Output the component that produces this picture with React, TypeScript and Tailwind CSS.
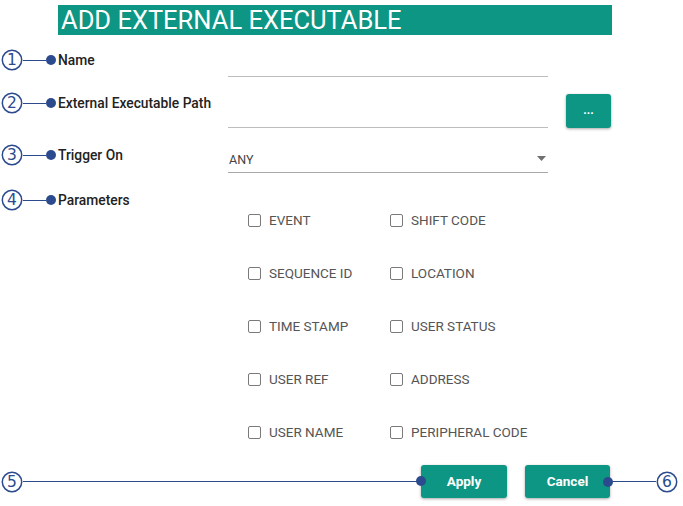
import React from "react";

const BLUE = "#2c4b8e";

function Num({ n }: { n: string }) {
  return (
    <svg width="22" height="22" viewBox="0 0 22 22" className="shrink-0">
      <circle cx="11" cy="11" r="9.7" fill="none" stroke={BLUE} strokeWidth="1.5" />
      <text
        x="11"
        y="16.4"
        textAnchor="middle"
        fontSize="15.5"
        fill={BLUE}
        fontFamily="'DejaVu Sans', sans-serif"
        fontWeight="400"
      >
        {n}
      </text>
    </svg>
  );
}

function Dot() {
  return <span className="block w-[10px] h-[10px] rounded-full bg-[#2c4b8e] shrink-0" />;
}

function Label({ n, text }: { n: string; text: string }) {
  return (
    <div className="flex items-center h-[22px] pl-[1px]">
      <Num n={n} />
      <span className="block w-[23px] h-px bg-[#2c4b8e]" />
      <Dot />
      <span className="ml-[2px] text-[13.8px] font-medium text-[#222]">{text}</span>
    </div>
  );
}

function Check({ text }: { text: string }) {
  return (
    <div className="flex items-center h-[20px]">
      <span className="block w-[13px] h-[13px] rounded-[2px] border-[1.5px] border-[#7a7a7a] bg-white" />
      <span className="ml-[8px] text-[13.5px] text-[#555]">{text}</span>
    </div>
  );
}

export default function App() {
  const params: [string, string][] = [
    ["EVENT", "SHIFT CODE"],
    ["SEQUENCE ID", "LOCATION"],
    ["TIME STAMP", "USER STATUS"],
    ["USER REF", "ADDRESS"],
    ["USER NAME", "PERIPHERAL CODE"],
  ];
  return (
    <div
      className="w-[683px] h-[506px] bg-white overflow-hidden"
      style={{ fontFamily: "Roboto, 'Liberation Sans', sans-serif" }}
    >
      <div className="ml-[58px] mt-[5px] w-[554px] h-[30px] bg-[#0d9683] pl-[3px] text-white text-[25.5px] leading-[31px]">
        ADD EXTERNAL EXECUTABLE
      </div>

      {/* Name */}
      <div className="flex h-[42px]">
        <div className="w-[228px] pt-[14px]">
          <Label n="1" text="Name" />
        </div>
        <div className="w-[320px] border-b-[1.5px] border-[#bdbdbd]" />
      </div>

      {/* Path */}
      <div className="flex h-[51px]">
        <div className="w-[228px] pt-[15px]">
          <Label n="2" text="External Executable Path" />
        </div>
        <div className="w-[320px] border-b-[1.5px] border-[#bdbdbd]" />
        <div className="ml-[18px] mt-[17px] w-[45px] h-[34px] rounded-[3px] bg-[#0d9683] shadow-[0_1px_3px_rgba(0,0,0,0.35)] flex items-center justify-center text-white text-[12px] font-bold leading-none pb-[3px]">
          ...
        </div>
      </div>

      {/* Trigger */}
      <div className="flex h-[45px]">
        <div className="w-[228px] pt-[16px]">
          <Label n="3" text="Trigger On" />
        </div>
        <div className="w-[320px] border-b-[1.5px] border-[#a8a8a8] flex items-end justify-between pb-[2px] pl-[1px] pr-[2px]">
          <span className="text-[12.5px] text-[#444]">ANY</span>
          <svg width="9" height="5" viewBox="0 0 9 5" className="mb-[9px]">
            <path d="M0 0 L9 0 L4.5 5 Z" fill="#707070" />
          </svg>
        </div>
      </div>

      {/* Parameters */}
      <div className="h-[37px] pt-[16px]">
        <Label n="4" text="Parameters" />
      </div>

      <div className="ml-[248px] flex flex-col gap-y-[33px]">
        {params.map(([a, b]) => (
          <div key={a} className="grid grid-cols-[142px_auto]">
            <Check text={a} />
            <Check text={b} />
          </div>
        ))}
      </div>

      {/* Buttons */}
      <div className="mt-[23px] flex items-center h-[33px] pl-[1px]">
        <Num n="5" />
        <span className="block flex-1 h-px bg-[#2c4b8e]" />
        <div className="relative w-[86px] h-[33px] rounded-[3px] bg-[#0d9683] shadow-[0_1px_3px_rgba(0,0,0,0.35)] flex items-center justify-center text-white text-[13.5px] font-bold">
          Apply
          <span className="absolute left-[-5px] top-[11px] w-[10px] h-[10px] rounded-full bg-[#2c4b8e]" />
        </div>
        <div className="relative ml-[18px] w-[85px] h-[33px] rounded-[3px] bg-[#0d9683] shadow-[0_1px_3px_rgba(0,0,0,0.35)] flex items-center justify-center text-white text-[13.5px] font-bold">
          Cancel
          <span className="absolute right-[-3px] top-[12px] w-[10px] h-[10px] rounded-full bg-[#2c4b8e]" />
        </div>
        <span className="block w-[46px] h-px bg-[#2c4b8e]" />
        <Num n="6" />
        <span className="w-[5px]" />
      </div>
    </div>
  );
}
